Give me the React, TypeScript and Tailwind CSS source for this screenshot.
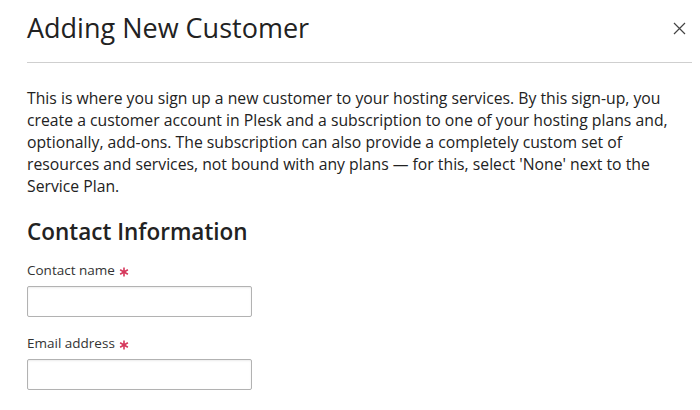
import React from "react";

const Required: React.FC = () => (
  <svg width="10" height="10" viewBox="0 0 10 10" className="inline-block ml-[4px] mb-[-1px]">
    <path d="M5 0.5V9.5M1.1 2.75L8.9 7.25M8.9 2.75L1.1 7.25" stroke="#d6385c" strokeWidth="1.6" />
  </svg>
);

const Field: React.FC<{ label: string }> = ({ label }) => (
  <div className="flex flex-col">
    <label className="text-[13.5px] leading-[20px] text-[#333] mb-[6px]">
      {label}
      <Required />
    </label>
    <input
      type="text"
      className="w-[225px] h-[31px] border border-[#b2b2b2] rounded-[2px] shadow-[inset_0_1px_2px_rgba(0,0,0,0.08)] bg-white outline-none"
    />
  </div>
);

const App: React.FC = () => {
  return (
    <div className="w-[700px] h-[410px] bg-white overflow-hidden font-['Open_Sans',sans-serif] text-[#222]">
      <div className="ml-[27px] mr-[8px]">
        <div className="flex items-center justify-between h-[63px] border-b border-[#cfcfcf] pb-[6px]">
          <h1 className="text-[27px] leading-[34px] font-normal text-[#222]">Adding New Customer</h1>
          <button className="mr-[6px]">
            <svg width="13" height="13" viewBox="0 0 13 13">
              <path d="M1 1L12 12M12 1L1 12" stroke="#444" strokeWidth="1.2" />
            </svg>
          </button>
        </div>

        <p className="mt-[24px] text-[15.75px] leading-[22px] text-[#222] w-[665px]">
          This is where you sign up a new customer to your hosting services. By this sign-up, you
          create a customer account in Plesk and a subscription to one of your hosting plans and,
          optionally, add-ons. The subscription can also provide a completely custom set of
          resources and services, not bound with any plans — for this, select 'None' next to the
          Service Plan.
        </p>

        <h2 className="mt-[19px] text-[22.5px] leading-[32px] font-semibold text-[#222]">Contact Information</h2>

        <div className="mt-[12px] flex flex-col gap-[16px]">
          <Field label="Contact name" />
          <Field label="Email address" />
        </div>
      </div>
    </div>
  );
};

export default App;
